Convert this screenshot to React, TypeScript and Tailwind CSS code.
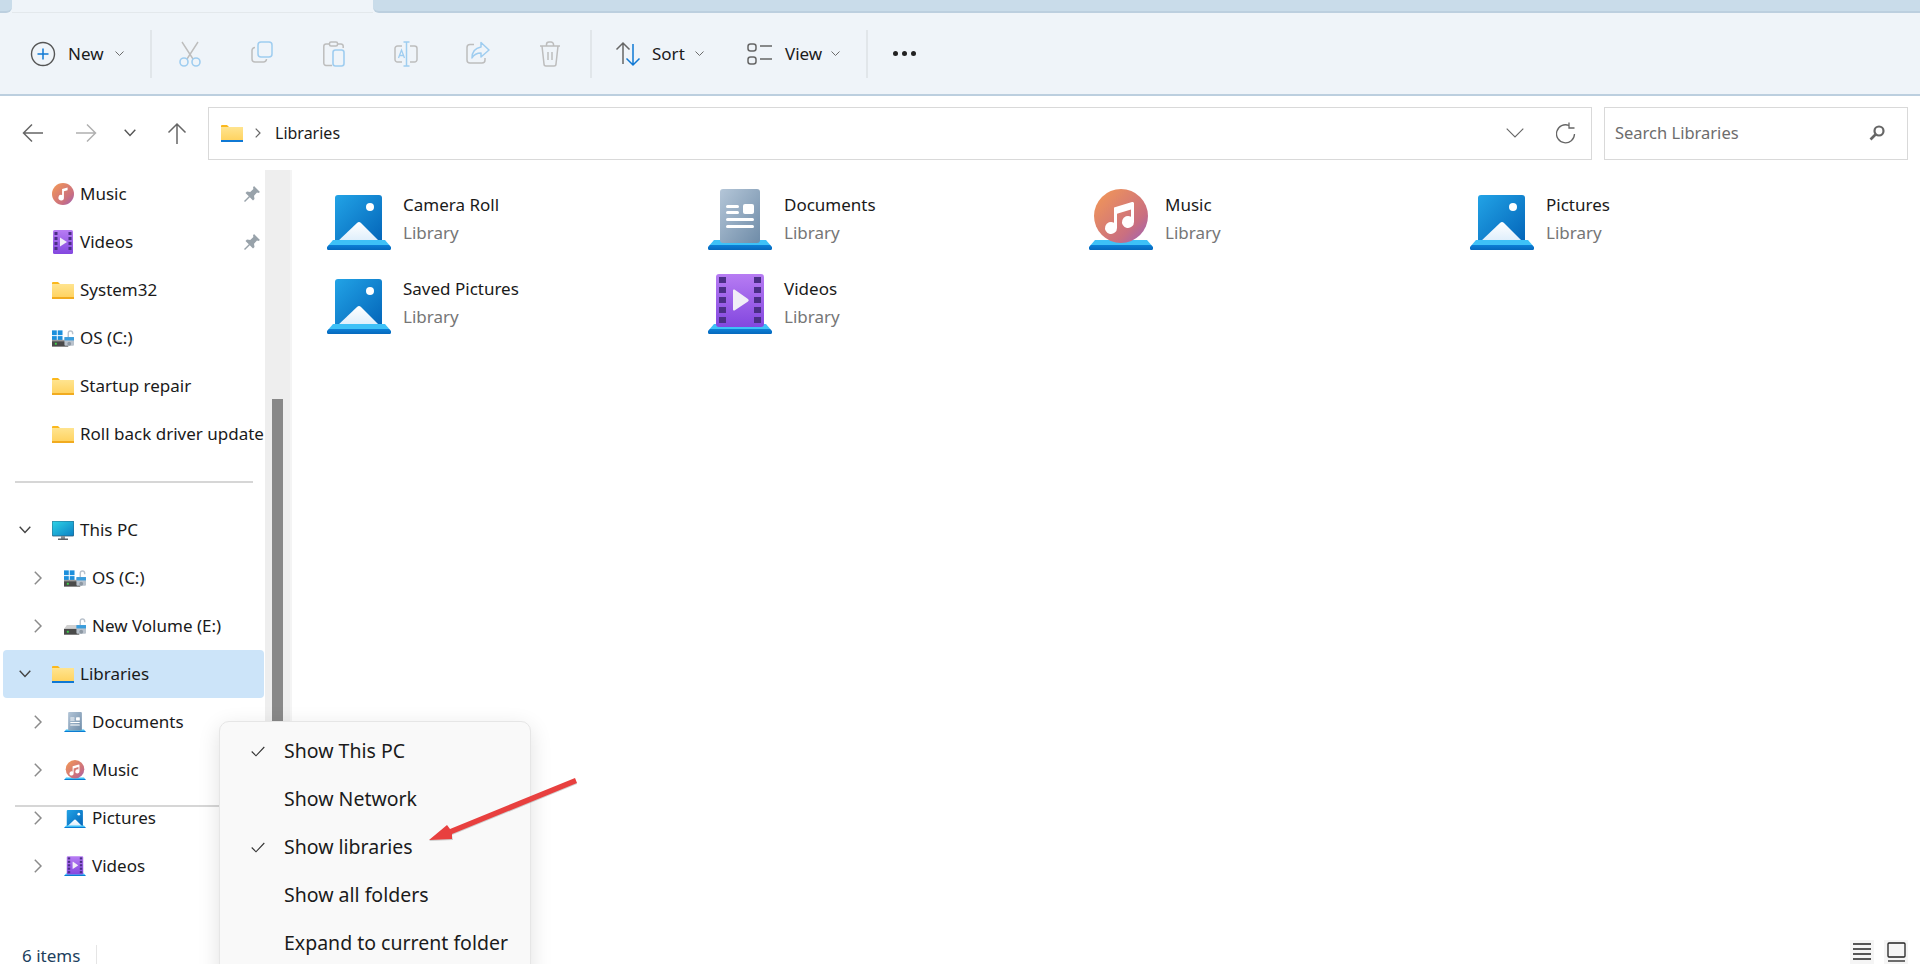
import React from "react";

const blue = "#9fcdf0";
const grey = "#bdbdbd";

const Defs = () => (
  <svg className="absolute w-0 h-0" aria-hidden="true">
    <defs>
      <linearGradient id="pic" x1="0" y1="0" x2="1" y2="1">
        <stop offset="0" stopColor="#22a3e6" />
        <stop offset="1" stopColor="#0364b8" />
      </linearGradient>
      <linearGradient id="shelf" x1="0" y1="0" x2="0" y2="1">
        <stop offset="0" stopColor="#3ec1f7" />
        <stop offset="0.45" stopColor="#3ec1f7" />
        <stop offset="0.5" stopColor="#0c7fd6" />
        <stop offset="1" stopColor="#0669bd" />
      </linearGradient>
      <linearGradient id="mount" x1="0" y1="0" x2="0" y2="1">
        <stop offset="0" stopColor="#ffffff" />
        <stop offset="1" stopColor="#dcedfb" />
      </linearGradient>
      <linearGradient id="doc" x1="0" y1="0" x2="1" y2="1">
        <stop offset="0" stopColor="#b4c6d8" />
        <stop offset="1" stopColor="#6f8ca8" />
      </linearGradient>
      <linearGradient id="mus" x1="0" y1="0" x2="1" y2="1">
        <stop offset="0" stopColor="#f59a54" />
        <stop offset="0.7" stopColor="#ca6f80" />
        <stop offset="1" stopColor="#9a62bc" />
      </linearGradient>
      <linearGradient id="vid" x1="0" y1="0" x2="0" y2="1">
        <stop offset="0" stopColor="#b77cf3" />
        <stop offset="1" stopColor="#8347df" />
      </linearGradient>
      <linearGradient id="fold" x1="0" y1="0" x2="0" y2="1">
        <stop offset="0" stopColor="#ffe48f" />
        <stop offset="1" stopColor="#ffd25e" />
      </linearGradient>
      <linearGradient id="screen" x1="0" y1="0" x2="1" y2="1">
        <stop offset="0" stopColor="#2fd4e6" />
        <stop offset="1" stopColor="#0a7fc4" />
      </linearGradient>
    </defs>
  </svg>
);

const Shelf = () => <path d="M6 51h52l6 7v1.500a1.500 1.500 0 0 1-1.500 1.500h-61a1.500 1.500 0 0 1-1.500-1.500V58z" fill="url(#shelf)" />;

const PicturesIcon = ({ w = 64 }: { w?: number }) => (
  <svg width={w} height={(w * 61) / 64} viewBox="0 0 64 61">
    <rect x="8" y="6" width="47" height="48" rx="3" fill="url(#pic)" />
    <circle cx="43" cy="18" r="4" fill="#fff" />
    <path d="M10 53 30 34a3 3 0 0 1 4 0l19 19z" fill="url(#mount)" />
    <Shelf />
  </svg>
);

const DocumentsIcon = ({ w = 64 }: { w?: number }) => (
  <svg width={w} height={(w * 61) / 64} viewBox="0 0 64 61">
    <Shelf />
    <rect x="12" y="0" width="40" height="54" rx="3" fill="url(#doc)" />
    <g fill="#fff">
      <rect x="18" y="16" width="13" height="3" rx="1.500" />
      <rect x="18" y="22" width="13" height="3" rx="1.500" />
      <rect x="35" y="15" width="11" height="10" rx="2" />
      <rect x="18" y="29" width="28" height="3" rx="1.500" />
      <rect x="18" y="36" width="28" height="3" rx="1.500" />
    </g>
  </svg>
);

const MusicIcon = ({ w = 64 }: { w?: number }) => (
  <svg width={w} height={(w * 61) / 64} viewBox="0 0 64 61">
    <Shelf />
    <circle cx="32" cy="27" r="27" fill="url(#mus)" />
    <path
      d="M25 18.500 43 13a1.500 1.500 0 0 1 2 1.500V33a6 6 0 1 1-3-5.200V20.500l-14 4.300V39a6 6 0 1 1-3-5.200z"
      fill="#fff"
    />
  </svg>
);

const VideosIcon = ({ w = 64 }: { w?: number }) => (
  <svg width={w} height={(w * 61) / 64} viewBox="0 0 64 61">
    <Shelf />
    <rect x="8" y="1" width="48" height="53" rx="3" fill="url(#vid)" />
    <g fill="#4b2f86">
      {[4, 14, 24, 34, 44].map((y) => (
        <React.Fragment key={y}>
          <rect x="11" y={y} width="7" height="6" />
          <rect x="46" y={y} width="7" height="6" />
        </React.Fragment>
      ))}
    </g>
    <path d="M25 17.500a1 1 0 0 1 1.500-.900L40 26a1.500 1.500 0 0 1 0 2.400L26.500 37.400a1 1 0 0 1-1.500-.900z" fill="#f1eef7" />
  </svg>
);

const QuickMusic = () => (
  <svg width="24" height="24" viewBox="0 0 24 24">
    <circle cx="12" cy="12" r="12" fill="url(#mus)" />
    <path d="M11 6.500 17 5v3l-4 1v7a3 3 0 1 1-2-2.800z" fill="#fff" />
  </svg>
);

const QuickVideos = () => (
  <svg width="22" height="24" viewBox="0 0 22 24">
    <rect x="1" y="0" width="20" height="24" rx="1.500" fill="url(#vid)" />
    <g fill="#4b2f86">
      {[2, 7, 12, 17].map((y) => (
        <React.Fragment key={y}>
          <rect x="2.500" y={y} width="3" height="3" />
          <rect x="16.500" y={y} width="3" height="3" />
        </React.Fragment>
      ))}
    </g>
    <path d="M8 7.500 15 12l-7 4.500z" fill="#f1eef7" />
  </svg>
);

const Folder = ({ base = "#f1ab1f", w = 22 }: { base?: string; w?: number }) => (
  <svg width={w} height={(w * 17) / 22} viewBox="0 0 22 17">
    <path d="M0 1a1 1 0 0 1 1-1h5l2 2h-8z" fill="#fbb81d" />
    <rect x="0" y="2" width="22" height="14" fill="url(#fold)" />
    <rect x="0" y="15" width="22" height="2" fill={base} />
  </svg>
);

const Lock = () => (
  <g>
    <path d="M17 8V4a2.300 2.300 0 0 1 4.600 0v1" fill="none" stroke="#b9c2cc" strokeWidth="1.500" />
    <rect x="13" y="8" width="10" height="9" rx="1" fill="#b9c2cc" />
    <rect x="13" y="8" width="10" height="3.500" fill="#3a9ddc" />
    <circle cx="18" cy="15" r="2" fill="#8d98a3" />
  </g>
);

const OsDrive = () => (
  <svg width="23" height="19" viewBox="0 0 23 19">
    <g fill="#1c8fdc">
      <rect x="0" y="1" width="5" height="5" />
      <rect x="6" y="1" width="5" height="5" />
      <rect x="0" y="7" width="5" height="4" />
      <rect x="6" y="7" width="5" height="4" />
    </g>
    <rect x="0" y="11" width="17" height="7" fill="#4a4a4a" />
    <rect x="0" y="11" width="17" height="1.500" fill="#9a9a9a" />
    <rect x="3" y="14" width="2" height="2" fill="#3fd34a" />
    <Lock />
  </svg>
);

const DataDrive = () => (
  <svg width="23" height="19" viewBox="0 0 23 19">
    <path d="M3 8h11v10H0v-6z" fill="#d0d0d0" />
    <rect x="0" y="12" width="16" height="6" fill="#4a4a4a" />
    <rect x="3" y="14" width="2" height="2" fill="#3fd34a" />
    <Lock />
  </svg>
);

const Monitor = () => (
  <svg width="22" height="19" viewBox="0 0 22 19">
    <rect x="0" y="0" width="22" height="15" rx="1" fill="url(#screen)" />
    <rect x="0" y="0" width="22" height="15" rx="1" fill="none" stroke="#2d5a78" strokeWidth="0.800" />
    <rect x="9" y="15" width="4" height="3" fill="#8a8f94" />
    <rect x="6" y="17.500" width="10" height="1.500" fill="#5c6166" />
  </svg>
);

const Pin = () => (
  <svg width="16" height="16" viewBox="0 0 16 16">
    <path d="M10 0 16 6 14.500 7 13 6.600 10 9.800 10.500 13 9 14.500 5.800 11.200 1 16 0 15 4.800 10.200 1.500 7 3 5.500 6.200 6 9.400 3 9 1.500z" fill="#98a2aa" />
  </svg>
);

const Chevron = ({ open, light }: { open?: boolean; light?: boolean }) =>
  open ? (
    <svg width="12" height="8" viewBox="0 0 12 8">
      <path d="M.7.7 6 6.500 11.300.7" fill="none" stroke="#444" strokeWidth="1.400" />
    </svg>
  ) : (
    <svg width="8" height="14" viewBox="0 0 8 14">
      <path d="M.8.8 7 7 .8 13.200" fill="none" stroke={light ? "#aaa" : "#8b8b8b"} strokeWidth="1.500" />
    </svg>
  );

const MiniChevron = () => (
  <svg width="9" height="5" viewBox="0 0 9 5">
    <path d="M.5.500 4.500 4.500 8.500.500" fill="none" stroke="#6b6b6b" strokeWidth="1" />
  </svg>
);

const Separator = () => <div className="w-[2px] h-[48px] bg-[#e1e6ea]" />;

const ToolIcon = ({ children }: { children: React.ReactNode }) => (
  <div className="w-[72px] flex justify-center">{children}</div>
);

const Toolbar = () => (
  <div className="h-[81px] bg-[#eff4f9] flex items-center pl-[30px] text-[#1b1b1b] text-[17px]">
    <svg width="26" height="26" viewBox="0 0 26 26">
      <circle cx="13" cy="13" r="11.500" fill="none" stroke="#555" strokeWidth="1.400" />
      <path d="M13 7.500v11M7.500 13h11" stroke="#0f78d4" strokeWidth="1.500" />
    </svg>
    <span className="ml-[12px] w-[41px]">New</span>
    <div className="ml-[6px] w-[35px]">
      <MiniChevron />
    </div>
    <Separator />
    <div className="flex ml-[2px] mr-[4px]">
      <ToolIcon>
        <svg width="24" height="26" viewBox="0 0 24 26">
          <path d="M4 1 15 18M20 1 9 18" stroke={grey} strokeWidth="1.400" fill="none" />
          <circle cx="6" cy="21" r="4" fill="none" stroke={blue} strokeWidth="1.600" />
          <circle cx="18" cy="21" r="4" fill="none" stroke={blue} strokeWidth="1.600" />
        </svg>
      </ToolIcon>
      <ToolIcon>
        <svg width="22" height="22" viewBox="0 0 22 22">
          <path d="M4 6.500A3 3 0 0 0 1 9.500V18a3 3 0 0 0 3 3h8.500a3 3 0 0 0 3-3" fill="none" stroke={grey} strokeWidth="1.500" />
          <rect x="7" y="1" width="14" height="15" rx="3" fill="none" stroke={blue} strokeWidth="1.500" />
        </svg>
      </ToolIcon>
      <ToolIcon>
        <svg width="22" height="26" viewBox="0 0 22 26">
          <path d="M6 3H3a2.200 2.200 0 0 0-2.200 2.200v17A2.200 2.200 0 0 0 3 24.500h6M15 3h3a2.200 2.200 0 0 1 2.200 2.200V7" fill="none" stroke={grey} strokeWidth="1.500" />
          <rect x="6.500" y="1" width="8" height="4" rx="1.500" fill="none" stroke={grey} strokeWidth="1.500" />
          <rect x="10" y="9" width="11" height="16" rx="2.500" fill="none" stroke={blue} strokeWidth="1.600" />
        </svg>
      </ToolIcon>
      <ToolIcon>
        <svg width="24" height="26" viewBox="0 0 24 26">
          <path d="M8 5H3.500A2.500 2.500 0 0 0 1 7.500v11A2.500 2.500 0 0 0 3.500 21H8M16 5h4.500A2.500 2.500 0 0 1 23 7.500v11a2.500 2.500 0 0 1-2.500 2.500H16" fill="none" stroke={grey} strokeWidth="1.500" />
          <path d="M12.500 1v24M9.500 1h6M9.500 25h6" fill="none" stroke={blue} strokeWidth="1.500" />
          <path d="M4.500 17 7.500 9 10.500 17M5.500 14.500h4" fill="none" stroke={blue} strokeWidth="1.300" />
        </svg>
      </ToolIcon>
      <ToolIcon>
        <svg width="24" height="24" viewBox="0 0 24 24">
          <path d="M8 3.500H4A3 3 0 0 0 1 6.500V19a3 3 0 0 0 3 3h12a3 3 0 0 0 3-3v-2" fill="none" stroke={grey} strokeWidth="1.500" />
          <path d="M15 1.500 23 9l-8 7v-4c-4 0-7 1.500-9 5 0-6 3.500-10 9-11z" fill="none" stroke={blue} strokeWidth="1.500" strokeLinejoin="round" />
        </svg>
      </ToolIcon>
      <ToolIcon>
        <svg width="22" height="26" viewBox="0 0 22 26">
          <path d="M1 5h20M3 5l2 18a2 2 0 0 0 2 2h8a2 2 0 0 0 2-2l2-18M7.500 5V3.500A2.500 2.500 0 0 1 10 1h2a2.500 2.500 0 0 1 2.500 2.500V5M9 11v8M13 11v8" fill="none" stroke={grey} strokeWidth="1.500" />
        </svg>
      </ToolIcon>
    </div>
    <Separator />
    <div className="ml-[23px] flex items-center">
      <svg width="26" height="26" viewBox="0 0 26 26">
        <path d="M8 23V2M1.500 8.500 8 2l6.500 6.500" fill="none" stroke="#666" strokeWidth="1.500" />
        <path d="M18 3v21M11.500 17.500 18 24l6.500-6.500" fill="none" stroke="#0f78d4" strokeWidth="1.500" />
      </svg>
      <span className="ml-[11px] w-[40px]">Sort</span>
      <div className="ml-[3px]">
        <MiniChevron />
      </div>
    </div>
    <div className="ml-[43px] flex items-center">
      <svg width="26" height="24" viewBox="0 0 26 24">
        <rect x="1" y="2" width="8" height="7" rx="2.500" fill="none" stroke="#666" strokeWidth="1.500" />
        <rect x="1" y="15" width="8" height="7" rx="2.500" fill="none" stroke="#666" strokeWidth="1.500" />
        <path d="M13 4h12M13 17h12" stroke="#666" strokeWidth="1.500" />
      </svg>
      <span className="ml-[12px] w-[42px]">View</span>
      <div className="ml-[4px]">
        <MiniChevron />
      </div>
    </div>
    <div className="ml-[26px]">
      <Separator />
    </div>
    <div className="ml-[25px] flex gap-[4px]">
      <span className="w-[5px] h-[5px] rounded-full bg-[#222]" />
      <span className="w-[5px] h-[5px] rounded-full bg-[#222]" />
      <span className="w-[5px] h-[5px] rounded-full bg-[#222]" />
    </div>
  </div>
);

const NavBar = () => (
  <div className="h-[74px] flex items-center text-[#1b1b1b]">
    <div className="w-[208px] flex items-center pl-[22px]">
      <svg width="22" height="20" viewBox="0 0 22 20">
        <path d="M21 10H2M10 1.500 1.500 10 10 18.500" fill="none" stroke="#666" strokeWidth="1.500" />
      </svg>
      <svg className="ml-[31px]" width="22" height="20" viewBox="0 0 22 20">
        <path d="M1 10H20M12 1.500 20.500 10 12 18.500" fill="none" stroke="#b0b0b0" strokeWidth="1.500" />
      </svg>
      <svg className="ml-[27px]" width="12" height="8" viewBox="0 0 12 8">
        <path d="M.7.7 6 6.500 11.300.7" fill="none" stroke="#555" strokeWidth="1.400" />
      </svg>
      <svg className="ml-[31px]" width="20" height="22" viewBox="0 0 20 22">
        <path d="M10 22V2M1.500 10.500 10 2l8.500 8.500" fill="none" stroke="#666" strokeWidth="1.500" />
      </svg>
    </div>
    <div className="w-[1384px] h-[53px] border border-[#d9d9d9] flex items-center pl-[12px] pr-[15px] text-[16px]">
      <Folder base="#0f78d4" />
      <svg className="ml-[12px]" width="6" height="10" viewBox="0 0 6 10">
        <path d="M.7.7 5 5 .7 9.300" fill="none" stroke="#666" strokeWidth="1.200" />
      </svg>
      <span className="ml-[14px]">Libraries</span>
      <svg className="ml-auto" width="18" height="10" viewBox="0 0 18 10">
        <path d="M.7.7 9 9 17.300.7" fill="none" stroke="#666" strokeWidth="1.100" />
      </svg>
      <svg className="ml-[32px]" width="20" height="22" viewBox="0 0 20 22">
        <path d="M13 3.500a9 9 0 1 0 5.500 8.500M13 .5v5.500h5.500" fill="none" stroke="#666" strokeWidth="1.300" />
      </svg>
    </div>
    <div className="ml-[12px] w-[304px] h-[53px] border border-[#d9d9d9] flex items-center pl-[10px] pr-[22px] text-[16.500px] text-[#6d6d6d]">
      <span>Search Libraries</span>
      <svg className="ml-auto" width="16" height="16" viewBox="0 0 16 16">
        <circle cx="10" cy="6" r="4.500" fill="none" stroke="#666" strokeWidth="2.200" />
        <path d="M6.500 9.500 1.500 14.500" stroke="#666" strokeWidth="2.600" />
      </svg>
    </div>
  </div>
);

const NavRow = ({
  label,
  icon,
  child,
  open,
  pin,
  selected,
}: {
  label: string;
  icon: React.ReactNode;
  child?: boolean;
  open?: boolean;
  pin?: boolean;
  selected?: boolean;
}) => (
  <div className={`h-12 flex items-center ${selected ? "bg-[#cce4f9] rounded-[4px] ml-[3px] w-[261px] -mr-[3px]" : ""}`}>
    <div className={`${child ? "w-[64px] pl-[34px]" : "w-[52px] pl-[19px]"} ${selected ? "-ml-[3px]" : ""} shrink-0 flex`}>
      {open !== undefined && <Chevron open={open} />}
    </div>
    <div className="w-[22px] h-[24px] flex items-center justify-center shrink-0">{icon}</div>
    <span className="ml-[6px] whitespace-nowrap text-[#1a1a1a]">{label}</span>
    {pin && (
      <div className="ml-auto mr-[5px]">
        <Pin />
      </div>
    )}
  </div>
);

const Sidebar = () => (
  <div className="relative w-[292px] shrink-0 flex border-r-2 border-[#f4f4f4] text-[17px]">
    <div className="w-[265px] shrink-0">
      <NavRow label="Music" icon={<QuickMusic />} pin />
      <NavRow label="Videos" icon={<QuickVideos />} pin />
      <NavRow label="System32" icon={<Folder />} />
      <NavRow label="OS (C:)" icon={<OsDrive />} />
      <NavRow label="Startup repair" icon={<Folder />} />
      <NavRow label="Roll back driver update" icon={<Folder />} />
      <div className="my-[23px] ml-[15px] w-[238px] h-[2px] bg-[#d6d6d6]" />
      <NavRow label="This PC" icon={<Monitor />} open />
      <NavRow label="OS (C:)" icon={<OsDrive />} child open={false} />
      <NavRow label="New Volume (E:)" icon={<DataDrive />} child open={false} />
      <NavRow label="Libraries" icon={<Folder base="#0f78d4" />} open selected />
      <NavRow label="Documents" icon={<DocumentsIcon w={22} />} child open={false} />
      <NavRow label="Music" icon={<MusicIcon w={22} />} child open={false} />
      <div className="relative">
        <div className="absolute top-[11px] left-[15px] w-[238px] h-[2px] bg-[#d6d6d6]" />
        <NavRow label="Pictures" icon={<PicturesIcon w={22} />} child open={false} />
      </div>
      <NavRow label="Videos" icon={<VideosIcon w={22} />} child open={false} />
    </div>
    <div className="w-[25px] bg-[#eeeeee] pl-[7px]">
      <div className="mt-[229px] w-[11px] h-[400px] bg-[#888888]" />
    </div>
  </div>
);

const items = [
  { name: "Camera Roll", icon: <PicturesIcon /> },
  { name: "Documents", icon: <DocumentsIcon /> },
  { name: "Music", icon: <MusicIcon /> },
  { name: "Pictures", icon: <PicturesIcon /> },
  { name: "Saved Pictures", icon: <PicturesIcon /> },
  { name: "Videos", icon: <VideosIcon /> },
];

const Content = () => (
  <div className="flex-1 pl-[35px] pt-[19px]">
    <div className="grid grid-cols-[repeat(4,381px)] auto-rows-[84px] text-[17px]">
      {items.map((it) => (
        <div key={it.name} className="flex">
          <div className="w-[64px] h-[61px]">{it.icon}</div>
          <div className="ml-[12px] pt-[2px]">
            <div className="leading-[28px] text-[#1a1a1a]">{it.name}</div>
            <div className="leading-[28px] text-[#767676]">Library</div>
          </div>
        </div>
      ))}
    </div>
  </div>
);

const menuItems = [
  { label: "Show This PC", checked: true },
  { label: "Show Network" },
  { label: "Show libraries", checked: true },
  { label: "Show all folders" },
  { label: "Expand to current folder" },
];

const ContextMenu = () => (
  <div className="absolute left-[219px] top-[721px] w-[312px] h-[260px] bg-[#f9f9f9] border border-[#e6e6e6] rounded-[10px] shadow-[0_6px_22px_rgba(0,0,0,0.12)] pt-[5px] text-[#1b1b1b] text-[19.500px]">
    {menuItems.map((m) => (
      <div key={m.label} className="h-12 flex items-center">
        <div className="w-[64px] pl-[31px] shrink-0">
          {m.checked && (
            <svg width="14" height="11" viewBox="0 0 14 11">
              <path d="M.7 5.500 5 9.800 13.300 1" fill="none" stroke="#333" strokeWidth="1.100" />
            </svg>
          )}
        </div>
        <span className="whitespace-nowrap">{m.label}</span>
      </div>
    ))}
  </div>
);

const Arrow = () => (
  <svg className="absolute left-[420px] top-[770px]" width="165" height="80" viewBox="0 0 165 80">
    <path d="M155 9 157 14 32 65 33 70 9 71 27 56 30 60z" fill="#7a7a7a" opacity="0.35" />
    <path d="M155 8 157 13 32 64 32 69 9 70 27 55 30 59z" fill="#e8403f" />
  </svg>
);

const StatusBar = () => (
  <div className="absolute left-0 bottom-0 w-full h-[24px] flex items-center text-[17px] text-[#1d3f5e] bg-white">
    <span className="ml-[22px] w-[74px] mt-[7px] leading-[16px]">6 items</span>
    <div className="w-[1px] h-[19px] self-end bg-[#e5e5e5]" />
    <div className="ml-auto flex items-center gap-[10px] mr-[12px]">
      <svg width="24" height="24" viewBox="0 0 24 24" className="bg-[#f5f5f5]">
        <path d="M3 4h18M3 9h18M3 14h18M3 19h18" stroke="#222" strokeWidth="1.300" />
      </svg>
      <svg width="24" height="24" viewBox="0 0 24 24" className="bg-[#f5f5f5]">
        <rect x="4" y="3" width="17" height="14" rx="1" fill="none" stroke="#222" strokeWidth="1.300" />
        <path d="M4 21h17" stroke="#222" strokeWidth="1.300" />
      </svg>
    </div>
  </div>
);

export default function App() {
  return (
    <div className="relative w-[1920px] h-[964px] overflow-hidden bg-white font-['Noto_Sans',sans-serif] flex flex-col">
      <Defs />
      <div className="h-[13px] flex shrink-0 bg-[#eff4f9]">
        <div className="w-[12px] bg-[#c9dcea] border-b-2 border-[#bccfdf] rounded-br-[6px]" />
        <div className="w-[361px] border-b border-[#e3e8ec]" />
        <div className="flex-1 bg-[#c9dcea] border-b-2 border-[#bccfdf] rounded-bl-[6px]" />
      </div>
      <Toolbar />
      <div className="h-[2px] bg-[#bccfdf] shrink-0" />
      <NavBar />
      <div className="flex flex-1 min-h-0">
        <Sidebar />
        <Content />
      </div>
      <StatusBar />
      <ContextMenu />
      <Arrow />
    </div>
  );
}
